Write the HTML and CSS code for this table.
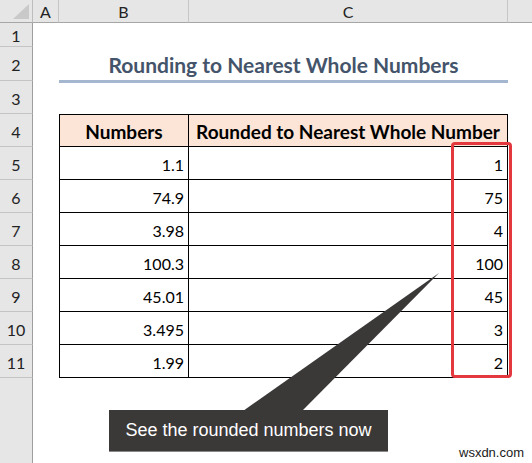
FILE: index.html
```html
<!DOCTYPE html>
<html lang="en">
<head>
<meta charset="utf-8">
<title>Rounding to Nearest Whole Numbers</title>
<link rel="stylesheet" href="styles.css">
</head>
<body>
<div class="sheet">
  <div class="corner"><span class="tri"></span></div>
  <div class="colhead">A</div>
  <div class="colhead">B</div>
  <div class="colhead">C</div>
  <div class="colhead last"></div>

  <div class="rowhead">1</div><div class="blank wide"></div>

  <div class="rowhead">2</div><div class="blank"></div>
  <div class="title">Rounding to Nearest Whole Numbers</div><div class="blank"></div>

  <div class="rowhead">3</div><div class="blank wide"></div>

  <div class="rowhead">4</div><div class="blank"></div>
  <div class="th first">Numbers</div><div class="th">Rounded to Nearest Whole Number</div><div class="blank"></div>

  <div class="rowhead">5</div><div class="blank"></div>
  <div class="td first">1.1</div><div class="td">1</div><div class="blank"></div>

  <div class="rowhead">6</div><div class="blank"></div>
  <div class="td first">74.9</div><div class="td">75</div><div class="blank"></div>

  <div class="rowhead">7</div><div class="blank"></div>
  <div class="td first">3.98</div><div class="td">4</div><div class="blank"></div>

  <div class="rowhead">8</div><div class="blank"></div>
  <div class="td first">100.3</div><div class="td">100</div><div class="blank"></div>

  <div class="rowhead">9</div><div class="blank"></div>
  <div class="td first">45.01</div><div class="td">45</div><div class="blank"></div>

  <div class="rowhead">10</div><div class="blank"></div>
  <div class="td first">3.495</div><div class="td">3</div><div class="blank"></div>

  <div class="rowhead">11</div><div class="blank"></div>
  <div class="td first">1.99</div><div class="td">2</div><div class="blank"></div>

  <div class="rowhead filler"></div><div class="blank wide"></div>
</div>

<div class="highlight"></div>

<svg class="pointer" width="532" height="463" viewBox="0 0 532 463" aria-hidden="true">
  <polygon points="243,411 439,273 302,411" fill="#3b3838"/>
</svg>
<div class="callout">See the rounded numbers now</div>

<div class="watermark">wsxdn.com</div>
</body>
</html>
```

FILE: styles.css
```css
* { box-sizing: border-box; }

html, body {
  margin: 0;
  padding: 0;
  background: #ffffff;
}

body {
  width: 532px;
  height: 463px;
  overflow: hidden;
  position: relative;
  font-family: Lato, "Open Sans", sans-serif;
  color: #000;
}

.sheet {
  display: grid;
  grid-template-columns: 33px 26px 130px 319px 1fr;
  grid-template-rows: 23px 24px 34px 33px repeat(8, 33px) 1fr;
  height: 463px;
}

.corner {
  background: #e6e6e6;
  border-right: 1px solid #bdbdbd;
  border-bottom: 1px solid #a6a6a6;
  position: relative;
}

.tri {
  position: absolute;
  right: 3px;
  bottom: 3px;
  width: 0;
  height: 0;
  border-left: 16px solid transparent;
  border-bottom: 15px solid #c9c9c9;
}

.colhead {
  background: #e6e6e6;
  border-right: 1px solid #c6c6c6;
  border-bottom: 1px solid #a6a6a6;
  display: flex;
  align-items: center;
  justify-content: center;
  font-size: 16px;
  color: #222;
  padding-top: 1px;
}

.colhead.last { border-right: none; }

.rowhead {
  background: #e6e6e6;
  border-right: 1px solid #9e9e9e;
  border-bottom: 1px solid #c4c4c4;
  display: flex;
  align-items: center;
  justify-content: center;
  font-size: 16px;
  color: #222;
  padding-top: 2px;
}

.rowhead.filler { border-bottom: none; }

.blank.wide { grid-column: span 4; }

.title {
  grid-column: span 2;
  border-bottom: 3px solid #a5b6d0;
  margin-bottom: -2px;
  display: flex;
  align-items: center;
  justify-content: center;
  font-weight: 700;
  font-size: 21px;
  color: #44546a;
  padding-top: 2px;
}

.th, .td {
  border-right: 1px solid #000;
  border-bottom: 1px solid #000;
  display: flex;
  align-items: center;
  padding-top: 2px;
}

.th {
  border-top: 1px solid #000;
  background: #fce4d6;
  justify-content: center;
  font-weight: 700;
  font-size: 19px;
}

.th.first, .td.first { border-left: 1px solid #000; }

.td {
  justify-content: flex-end;
  padding-right: 4px;
  font-size: 16px;
}

.highlight {
  position: absolute;
  left: 451px;
  top: 142px;
  width: 61px;
  height: 236px;
  border: 3px solid #e3393e;
  border-radius: 4px;
}

.pointer {
  position: absolute;
  left: 0;
  top: 0;
  pointer-events: none;
}

.callout {
  position: absolute;
  left: 109px;
  top: 410px;
  width: 279px;
  height: 42px;
  background: #3b3838;
  color: #ffffff;
  font-family: "Liberation Sans", Arial, sans-serif;
  font-size: 18px;
  display: flex;
  align-items: center;
  justify-content: center;
  border-bottom: 1px solid #8a8888;
}

.watermark {
  position: absolute;
  left: 459px;
  top: 445px;
  font-family: "Liberation Sans", Arial, sans-serif;
  font-size: 13px;
  color: #1a1a1a;
}
```
